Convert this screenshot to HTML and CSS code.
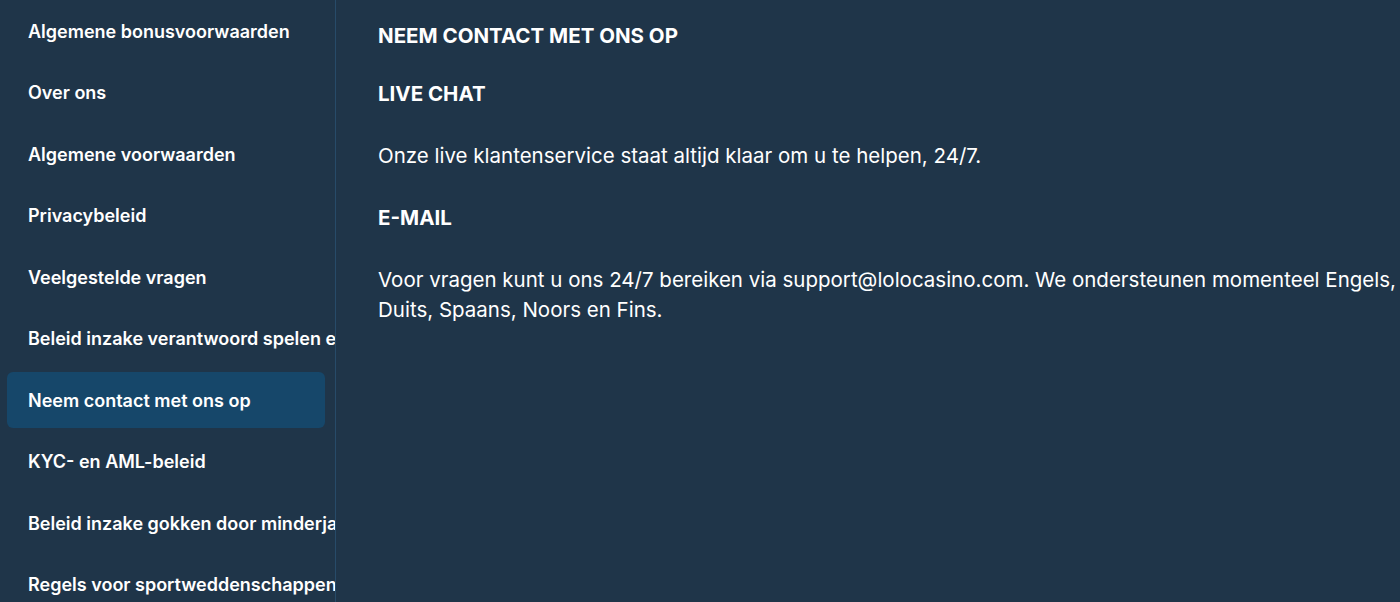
FILE: index.html
```html
<!DOCTYPE html>
<html lang="nl">

<head>
    <meta charset="UTF-8">
    <meta name="viewport" content="width=device-width, initial-scale=1.0">
    <title>Neem contact met ons op</title>
    <link rel="stylesheet" href="styles.css">
</head>

<body>
    <div class="page">
        <!-- zijmenu -->
        <nav class="side">
            <a href="#">Algemene bonusvoorwaarden</a>
            <a href="#">Over ons</a>
            <a href="#">Algemene voorwaarden</a>
            <a href="#">Privacybeleid</a>
            <a href="#">Veelgestelde vragen</a>
            <a href="#">Beleid inzake verantwoord spelen en zelfuitsluiting</a>
            <a href="#" class="active">Neem contact met ons op</a>
            <a href="#">KYC- en AML-beleid</a>
            <a href="#">Beleid inzake gokken door minderjarigen</a>
            <a href="#">Regels voor sportweddenschappen</a>
        </nav>

        <div class="content">
            <h1>NEEM CONTACT MET ONS OP</h1>
            <h2>LIVE CHAT</h2>
            <p>Onze live klantenservice staat altijd klaar om u te helpen, 24/7.</p>
            <h2>E-MAIL</h2>
            <p>Voor vragen kunt u ons 24/7 bereiken via support@lolocasino.com. We ondersteunen momenteel Engels, Duits, Spaans, Noors en Fins.</p>
        </div>
    </div>
</body>

</html>
```

FILE: styles.css
```css
* {
    padding: 0;
    margin: 0;
    box-sizing: border-box;
}

body {
    background-color: #1f3549;
    color: #fff;
    font-family: Inter, "Noto Sans", sans-serif;
    overflow: hidden;
}

.page {
    display: flex;
    height: 602px;
}

/* zijmenu */
.side {
    width: 336px;
    flex-shrink: 0;
    border-right: 1px solid #274b69;
    padding: 3px 10px 0 7px;
    display: flex;
    flex-direction: column;
    gap: 5.5px;
    overflow: hidden;
}

.side a {
    display: flex;
    align-items: center;
    flex-shrink: 0;
    height: 56px;
    padding-left: 21px;
    border-radius: 6px;
    color: #fff;
    text-decoration: none;
    font-size: 18px;
    font-weight: 600;
    white-space: nowrap;
}

.side a.active {
    background-color: #16476a;
}

.content {
    flex: 1;
    padding: 21px 0 0 42px;
}

.content h1,
.content h2 {
    font-size: 20.5px;
    font-weight: 700;
    line-height: 30px;
    margin-bottom: 32px;
}

.content h1 {
    margin-bottom: 28px;
}

.content p {
    font-size: 20.5px;
    line-height: 30px;
    margin-bottom: 32px;
}
```
